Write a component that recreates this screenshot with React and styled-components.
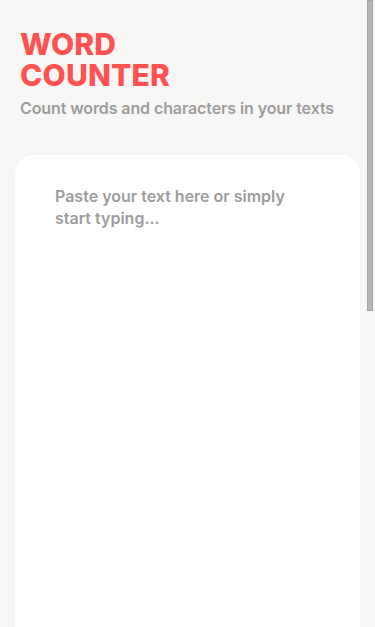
import styled, { createGlobalStyle } from 'styled-components';

const GlobalStyle = createGlobalStyle`
    * {
        box-sizing: border-box;
    }

    body {
        margin: 0;
        background: #f8f7f5;
        font-family: 'Inter', 'Noto Sans', sans-serif;
    }
`;

const Page = styled.main`
    padding: 29px 15px 48px 15px;
`;

const Header = styled.header`
    padding-left: 5px;
    margin-bottom: 37px;
`;

const Title = styled.h1`
    margin: 0;
    color: #fe5252;
    font-size: 30px;
    line-height: 31px;
    font-weight: 800;
    letter-spacing: 0.2px;
    text-transform: uppercase;
`;

const Subtitle = styled.p`
    margin: 7px 0 0;
    color: #9d9d9d;
    font-size: 16px;
    font-weight: 600;
    letter-spacing: -0.1px;
`;

const Card = styled.section`
    background: #fff;
    border-radius: 18px;
    box-shadow: 0 0 3px rgba(0, 0, 0, 0.03);
    padding: 30px 40px;
`;

const TextArea = styled.textarea`
    display: block;
    width: 100%;
    height: 1000px;
    border: none;
    outline: none;
    resize: none;
    padding: 0;
    background: transparent;
    font-family: inherit;
    font-size: 16px;
    line-height: 22px;
    font-weight: 600;
    color: #333;

    &::placeholder {
        color: #9d9d9d;
    }
`;

/* the browser's scrollbar as seen in the shot */
const ScrollThumb = styled.div`
    position: fixed;
    top: 0;
    right: 2px;
    width: 6px;
    height: 311px;
    background: #b5b5b5;
    border: 1px solid #a6a6a6;
`;

export default function App() {
    return (
        <>
            <GlobalStyle />
            <Page>
                <Header>
                    <Title>Word<br />Counter</Title>
                    <Subtitle>Count words and characters in your texts</Subtitle>
                </Header>
                <Card>
                    <TextArea placeholder="Paste your text here or simply start typing..." />
                </Card>
            </Page>
            <ScrollThumb aria-hidden="true" />
        </>
    );
}
